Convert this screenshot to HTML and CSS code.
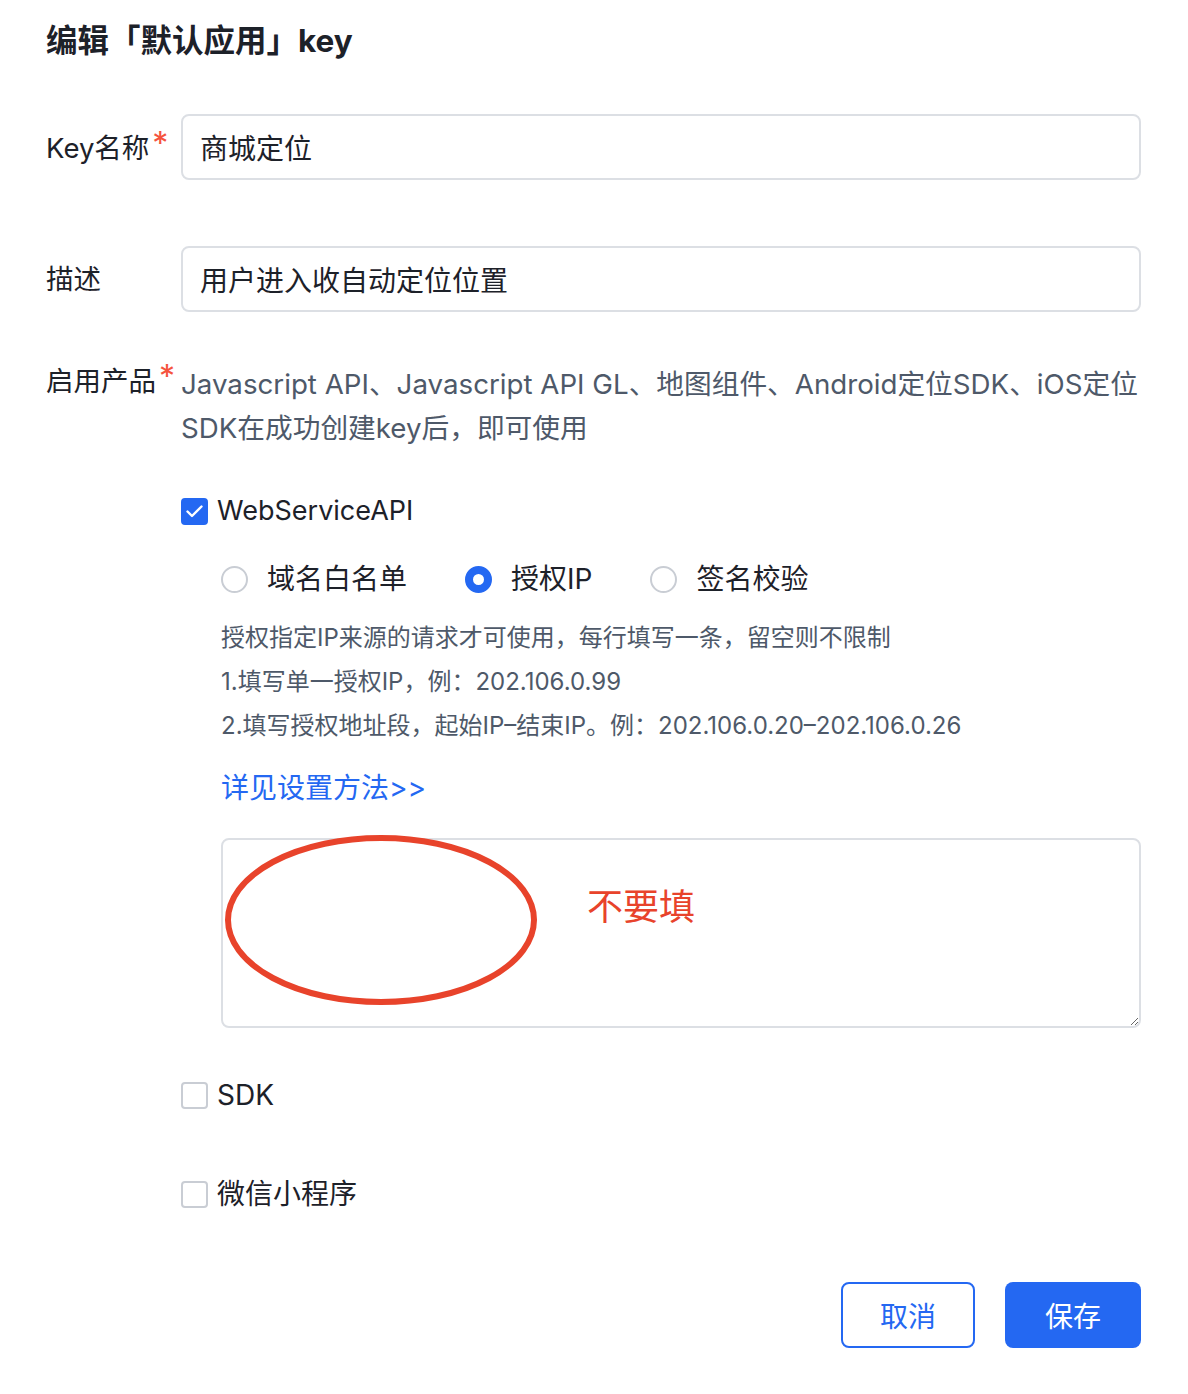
FILE: index.html
```html
<!DOCTYPE html>
<html lang="zh-CN">
<head>
  <meta charset="UTF-8">
  <title>编辑key</title>
  <link rel="stylesheet" href="styles.css">
</head>
<body>
  <div class="page">
    <h2 class="title">编辑「默认应用」key</h2>

    <div class="form-row row-name">
      <label class="label">Key名称<span class="req">*</span></label>
      <input class="text-input" type="text" value="商城定位">
    </div>

    <div class="form-row row-desc">
      <label class="label">描述</label>
      <input class="text-input" type="text" value="用户进入收自动定位位置">
    </div>

    <div class="form-row row-products">
      <label class="label">启用产品<span class="req">*</span></label>
      <div class="products">
        <p class="products-note">Javascript API、Javascript API GL、地图组件、Android定位SDK、iOS定位<br>SDK在成功创建key后，即可使用</p>

        <div class="check-row check-web">
          <span class="checkbox checked">
            <svg width="23" height="23" viewBox="0 0 23 23"><path d="M4.5 11.5 L9 16 L18.5 6.5" fill="none" stroke="#fff" stroke-width="2.4" stroke-linecap="round" stroke-linejoin="round"/></svg>
          </span>
          <span>WebServiceAPI</span>
        </div>

        <div class="service-box">
          <div class="radio-row">
            <span class="radio-item"><span class="radio"></span>域名白名单</span>
            <span class="radio-item"><span class="radio on"></span>授权IP</span>
            <span class="radio-item"><span class="radio"></span>签名校验</span>
          </div>

          <div class="hints">
            <p>授权指定IP来源的请求才可使用，每行填写一条，留空则不限制</p>
            <p>1.填写单一授权IP，例：202.106.0.99</p>
            <p>2.填写授权地址段，起始IP–结束IP。例：202.106.0.20–202.106.0.26</p>
          </div>

          <a class="help-link" href="#">详见设置方法&gt;&gt;</a>

          <div class="area-wrap">
            <textarea class="ip-area"></textarea>
            <svg class="mark-ellipse" width="316" height="174" viewBox="0 0 316 174">
              <ellipse cx="158" cy="87" rx="153" ry="82" fill="none" stroke="#e8432b" stroke-width="6"/>
            </svg>
            <span class="mark-note">不要填</span>
          </div>
        </div>

        <div class="check-row check-sdk">
          <span class="checkbox"></span>
          <span>SDK</span>
        </div>

        <div class="check-row check-wx">
          <span class="checkbox"></span>
          <span>微信小程序</span>
        </div>
      </div>
    </div>

    <div class="actions">
      <button type="button" class="btn btn-cancel">取消</button>
      <button type="button" class="btn btn-save">保存</button>
    </div>
  </div>
</body>
</html>
```

FILE: styles.css
```css
body {
  margin: 0;
  background: #fff;
  font-family: Inter, "Noto Sans CJK SC", sans-serif;
  color: #1d2129;
}

.page {
  width: 1095px;
  padding: 19px 47px 0 46px;
}

.title {
  margin: 0;
  font-size: 31.5px;
  line-height: 44px;
  font-weight: 700;
  color: #1d2129;
}

.form-row {
  display: flex;
  align-items: flex-start;
}

.row-name {
  margin-top: 51px;
  align-items: center;
}

.row-desc {
  margin-top: 66px;
  align-items: center;
}

.row-products {
  margin-top: 50px;
}

.label {
  width: 135px;
  flex-shrink: 0;
  font-size: 27.5px;
  line-height: 36px;
  color: #1d2129;
  white-space: nowrap;
}

.req {
  color: #f5533d;
  font-size: 32px;
  margin-left: 3px;
  position: relative;
  top: -3px;
}

.text-input {
  flex: 1;
  height: 66px;
  box-sizing: border-box;
  border: 2px solid #dcdfe4;
  border-radius: 8px;
  padding: 0 17px;
  font-family: Inter, "Noto Sans CJK SC", sans-serif;
  font-size: 28px;
  color: #1d2129;
  outline: none;
}

.products {
  flex: 1;
}

.products-note {
  margin: 0;
  font-size: 27.7px;
  line-height: 44px;
  color: #4e5969;
  white-space: nowrap;
}

.check-row {
  display: flex;
  align-items: center;
  gap: 9px;
  font-size: 28px;
  line-height: 44px;
  color: #1d2129;
}

.check-web {
  margin-top: 39px;
  font-size: 27px;
}

.check-sdk {
  margin-top: 45px;
}

.check-wx {
  margin-top: 55px;
}

.checkbox {
  width: 27px;
  height: 27px;
  box-sizing: border-box;
  border: 2px solid #c9cdd4;
  border-radius: 4px;
  display: flex;
  align-items: center;
  justify-content: center;
}

.checkbox.checked {
  background: #2468f2;
  border-color: #2468f2;
}

.service-box {
  padding-left: 40px;
}

.radio-row {
  margin-top: 24px;
  display: flex;
  gap: 58px;
  font-size: 28px;
  line-height: 44px;
  color: #1d2129;
}

.radio-item {
  display: flex;
  align-items: center;
  gap: 19px;
}

.radio {
  width: 27px;
  height: 27px;
  box-sizing: border-box;
  border: 2px solid #c9cdd4;
  border-radius: 50%;
}

.radio.on {
  border: 8px solid #2468f2;
  background: #fff;
}

.hints {
  margin-top: 15px;
  font-size: 24px;
  line-height: 44px;
  color: #4e5969;
}

.hints p {
  margin: 0;
}

.help-link {
  display: block;
  margin-top: 18px;
  font-size: 28px;
  line-height: 44px;
  color: #2468f2;
  text-decoration: none;
}

.area-wrap {
  position: relative;
  margin-top: 28px;
}

.ip-area {
  display: block;
  width: 100%;
  height: 190px;
  box-sizing: border-box;
  border: 2px solid #dcdfe4;
  border-radius: 8px;
  font-size: 28px;
  resize: vertical;
  outline: none;
}

.mark-ellipse {
  position: absolute;
  left: 2px;
  top: -5px;
}

.mark-note {
  position: absolute;
  left: 366px;
  top: 51px;
  font-size: 36px;
  line-height: 36px;
  color: #e8432b;
}

.actions {
  margin-top: 66px;
  display: flex;
  justify-content: flex-end;
  gap: 30px;
}

.btn {
  height: 66px;
  box-sizing: border-box;
  border-radius: 8px;
  font-family: Inter, "Noto Sans CJK SC", sans-serif;
  font-size: 28px;
  cursor: pointer;
}

.btn-cancel {
  width: 134px;
  background: #fff;
  border: 2px solid #2468f2;
  color: #2468f2;
}

.btn-save {
  width: 136px;
  background: #2468f2;
  border: none;
  color: #fff;
}
```
